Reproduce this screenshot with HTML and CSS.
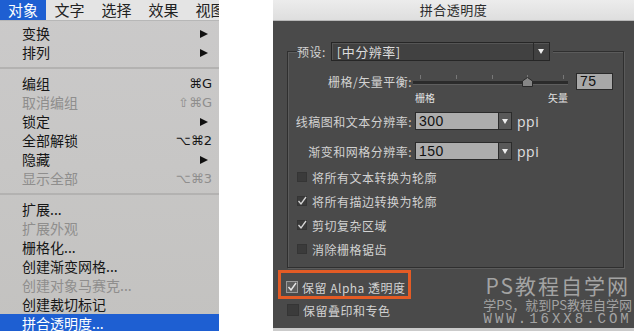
FILE: index.html
```html
<!DOCTYPE html>
<html lang="zh-CN">
<head>
    <meta charset="utf-8">
    <title>拼合透明度</title>
    <link rel="stylesheet" href="styles.css">
</head>
<body>
    <div class="menu">
        <div class="menubar">
            <span class="bar-item active">对象</span>
            <span class="bar-item">文字</span>
            <span class="bar-item">选择</span>
            <span class="bar-item">效果</span>
            <span class="bar-item">视图</span>
        </div>
        <ul class="dropdown">
            <li class="item">变换<span class="arrow"></span></li>
            <li class="item">排列<span class="arrow"></span></li>
            <li class="sep"></li>
            <li class="item">编组<span class="key">⌘G</span></li>
            <li class="item disabled">取消编组<span class="key">⇧⌘G</span></li>
            <li class="item">锁定<span class="arrow"></span></li>
            <li class="item">全部解锁<span class="key">⌥⌘2</span></li>
            <li class="item">隐藏<span class="arrow"></span></li>
            <li class="item disabled">显示全部<span class="key">⌥⌘3</span></li>
            <li class="sep"></li>
            <li class="item">扩展...</li>
            <li class="item disabled">扩展外观</li>
            <li class="item">栅格化...</li>
            <li class="item">创建渐变网格...</li>
            <li class="item disabled">创建对象马赛克...</li>
            <li class="item">创建裁切标记</li>
            <li class="item selected">拼合透明度...</li>
        </ul>
    </div>

    <div class="dialog">
        <div class="titlebar">拼合透明度</div>
        <div class="dialog-body">
            <fieldset class="group">
                <legend class="preset">
                    <span>预设:</span>
                    <span class="select">[中分辨率]<span class="select-btn"></span></span>
                </legend>

                <div class="slider-row">
                    <span class="label">栅格/矢量平衡:</span>
                    <div class="slider">
                        <div class="ticks"><span></span><span></span><span></span><span></span><span></span></div>
                        <div class="track"></div>
                        <svg class="thumb" width="11" height="10" viewBox="0 0 11 10">
                            <path d="M5.5 0.5 L10.5 4 L10.5 9.5 L0.5 9.5 L0.5 4 Z" fill="#868686" stroke="#2a2a2a"/>
                        </svg>
                    </div>
                    <span class="num">75</span>
                </div>
                <div class="slider-ends"><span>栅格</span><span>矢量</span></div>

                <div class="res-row">
                    <span class="label">线稿图和文本分辨率:</span>
                    <span class="combo"><span class="combo-value">300</span><span class="combo-btn"></span></span>
                    <span class="unit">ppi</span>
                </div>
                <div class="res-row">
                    <span class="label">渐变和网格分辨率:</span>
                    <span class="combo"><span class="combo-value">150</span><span class="combo-btn"></span></span>
                    <span class="unit">ppi</span>
                </div>

                <div class="checks">
                    <label class="check"><span class="box"></span>将所有文本转换为轮廓</label>
                    <label class="check"><span class="box"><svg width="10" height="10" viewBox="0 0 10 10"><path d="M1.5 5 L4 8 L9 1" fill="none" stroke="#d6d6d6" stroke-width="1.3"/></svg></span>将所有描边转换为轮廓</label>
                    <label class="check"><span class="box"><svg width="10" height="10" viewBox="0 0 10 10"><path d="M1.5 5 L4 8 L9 1" fill="none" stroke="#d6d6d6" stroke-width="1.3"/></svg></span>剪切复杂区域</label>
                    <label class="check"><span class="box"></span>消除栅格锯齿</label>
                </div>
            </fieldset>

            <div class="footer">
                <div class="options">
                    <label class="check big alpha"><span class="box on"><svg width="10" height="10" viewBox="0 0 10 10"><path d="M1.5 5 L4 8 L9 1" fill="none" stroke="#e6e6e6" stroke-width="1.4"/></svg></span>保留 Alpha 透明度</label>
                    <label class="check big plain"><span class="box"></span>保留叠印和专色</label>
                </div>
                <div class="watermark">
                    <div class="wm-title">PS教程自学网</div>
                    <div class="wm-sub">学PS，就到PS教程自学网</div>
                    <div class="wm-url">WWW.16XX8.COM</div>
                </div>
            </div>
        </div>
    </div>
</body>
</html>
```

FILE: styles.css
```css
* {
    box-sizing: border-box;
}
body {
    margin: 0;
    background: #fff;
    display: flex;
    gap: 54px;
    height: 331px;
    overflow: hidden;
    font-family: "Noto Sans CJK SC", sans-serif;
}

/* left: object menu */
.menu {
    width: 219px;
    flex: none;
    overflow: hidden;
    background: linear-gradient(#cbcaca, #c3c2c0);
}
.menubar {
    display: flex;
    height: 21px;
    background: #e4e4e4;
    border-bottom: 1px solid #b7b7b7;
}
.bar-item {
    flex: none;
    width: 47px;
    text-align: center;
    font-size: 15px;
    line-height: 20px;
    color: #222;
}
.bar-item.active {
    width: 46px;
    background: #1e5fd2;
    color: #fff;
}
.dropdown {
    list-style: none;
    margin: 0;
    padding: 3px 0 0;
}
.item {
    display: flex;
    align-items: center;
    justify-content: space-between;
    height: 19px;
    padding: 0 7px 0 22px;
    font-size: 14px;
    line-height: 19px;
    color: #161616;
}
.item.disabled {
    color: #8f8e8d;
}
.item.selected {
    background: #1e5fd2;
    color: #fff;
}
.arrow {
    width: 0;
    height: 0;
    margin-right: 4px;
    border-left: 8px solid #111;
    border-top: 4.5px solid transparent;
    border-bottom: 4.5px solid transparent;
}
.key {
    font-family: "DejaVu Sans", sans-serif;
    font-size: 13px;
}
.sep {
    height: 12px;
    display: flex;
    align-items: center;
}
.sep::before {
    content: "";
    flex: 1;
    height: 2px;
    background: #b3b2b1;
}

/* right: flatten transparency dialog */
.dialog {
    width: 361px;
    flex: none;
    display: flex;
    flex-direction: column;
    background: #4a4a4a;
    border-bottom: 3px solid #cbcbcb;
    color: #d2d2d2;
    font-size: 12px;
    letter-spacing: 0.5px;
}
.titlebar {
    height: 21px;
    background: linear-gradient(#ececec, #dedede);
    border-bottom: 1px solid #b8b8b8;
    text-align: center;
    font-size: 13px;
    line-height: 20px;
    color: #2b2b2b;
}
.dialog-body {
    flex: 1;
    padding: 21px 0 0 5px;
}
.group {
    margin: 0 10px 0 9px;
    padding: 12px 0 6px 9px;
    min-width: 0;
    border: 1px solid #2f2f2f;
    box-shadow: 1px 1px 0 #5b5b5b, inset 1px 1px 0 #5b5b5b;
}
.preset {
    display: flex;
    align-items: center;
    gap: 5px;
    padding: 0 3px 0 0;
    background: #4a4a4a;
}
.select {
    display: flex;
    align-items: center;
    justify-content: space-between;
    width: 219px;
    height: 19px;
    padding-left: 5px;
    background: #414141;
    border: 1px solid #262626;
    box-shadow: inset 1px 1px 0 #555;
    font-size: 13px;
    color: #dcdcdc;
}
.select-btn {
    width: 16px;
    height: 17px;
    border-left: 1px solid #2a2a2a;
    display: flex;
    align-items: center;
    justify-content: center;
}
.select-btn::before,
.combo-btn::before {
    content: "";
    border-top: 5px solid #eee;
    border-left: 3.5px solid transparent;
    border-right: 3.5px solid transparent;
}

.label {
    width: 115px;
    flex: none;
    display: flex;
    justify-content: flex-end;
    white-space: nowrap;
}
.slider-row {
    display: flex;
    align-items: center;
    height: 17px;
}
.slider {
    position: relative;
    width: 155px;
    height: 17px;
    margin-left: 1px;
}
.ticks {
    display: flex;
    justify-content: space-between;
    height: 4px;
    margin-top: 2px;
    padding: 0 4px 0 7px;
}
.ticks span {
    width: 1px;
    height: 4px;
    background: #777;
}
.track {
    height: 3px;
    margin-top: 2px;
    background: #2b2b2b;
    box-shadow: 0 1px 0 #5e5e5e;
}
.thumb {
    position: absolute;
    left: 109px;
    top: 4px;
}
.num {
    width: 37px;
    height: 17px;
    margin-left: 8px;
    padding-left: 3px;
    background: #a8a8a8;
    border: 1px solid #2a2a2a;
    color: #111;
    font-family: "Liberation Sans", sans-serif;
    font-size: 14px;
    line-height: 15px;
}
.slider-ends {
    display: flex;
    justify-content: space-between;
    width: 153px;
    margin: 1px 0 0 118px;
    font-size: 10px;
    line-height: 13px;
    letter-spacing: 0;
    color: #e0e0e0;
}

.res-row {
    display: flex;
    align-items: center;
    height: 18px;
    margin-top: 8px;
}
.res-row + .res-row {
    margin-top: 12px;
}
.combo {
    display: flex;
    height: 18px;
    margin-left: 3px;
}
.combo-value {
    width: 83px;
    padding-left: 3px;
    background: #adadad;
    border: 1px solid #2b2b2b;
    border-right: 0;
    color: #111;
    font-family: "Liberation Sans", sans-serif;
    font-size: 14px;
    line-height: 16px;
}
.combo-btn {
    width: 14px;
    background: #595959;
    border: 1px solid #2b2b2b;
    display: flex;
    align-items: center;
    justify-content: center;
}
.unit {
    margin-left: 5px;
    font-family: "Open Sans", sans-serif;
    font-size: 14px;
    color: #e0e0e0;
}

.checks {
    margin-top: 5px;
}
.check {
    display: flex;
    align-items: center;
    gap: 5px;
    height: 24px;
}
.box {
    width: 10px;
    height: 10px;
    flex: none;
    background: #3b3b3b;
    border: 1px solid #353535;
    display: flex;
    align-items: center;
    justify-content: center;
}
.box svg {
    flex: none;
}

.footer {
    display: flex;
    align-items: flex-start;
    margin-top: 2px;
}
.options {
    display: flex;
    flex-direction: column;
    align-items: flex-start;
}
.check.big {
    gap: 4px;
}
.check.big .box {
    width: 12px;
    height: 12px;
}
.alpha {
    height: 29px;
    padding: 5px 2px 0 5px;
    border: 3px solid #e35b25;
}
.box.on {
    background: #5e5e5e;
    border-color: #9a9a9a;
}
.plain {
    height: 20px;
    margin: 1px 0 0 9px;
}
.watermark {
    margin: 3px 2px 0 auto;
    text-align: center;
    color: #a3a3a3;
    letter-spacing: 0;
}
.wm-title {
    font-size: 21px;
    line-height: 24px;
    letter-spacing: 2px;
}
.wm-sub {
    font-size: 13px;
    line-height: 15px;
}
.wm-url {
    font-family: "Liberation Mono", monospace;
    font-size: 14px;
    line-height: 15px;
    letter-spacing: 3px;
}
```
